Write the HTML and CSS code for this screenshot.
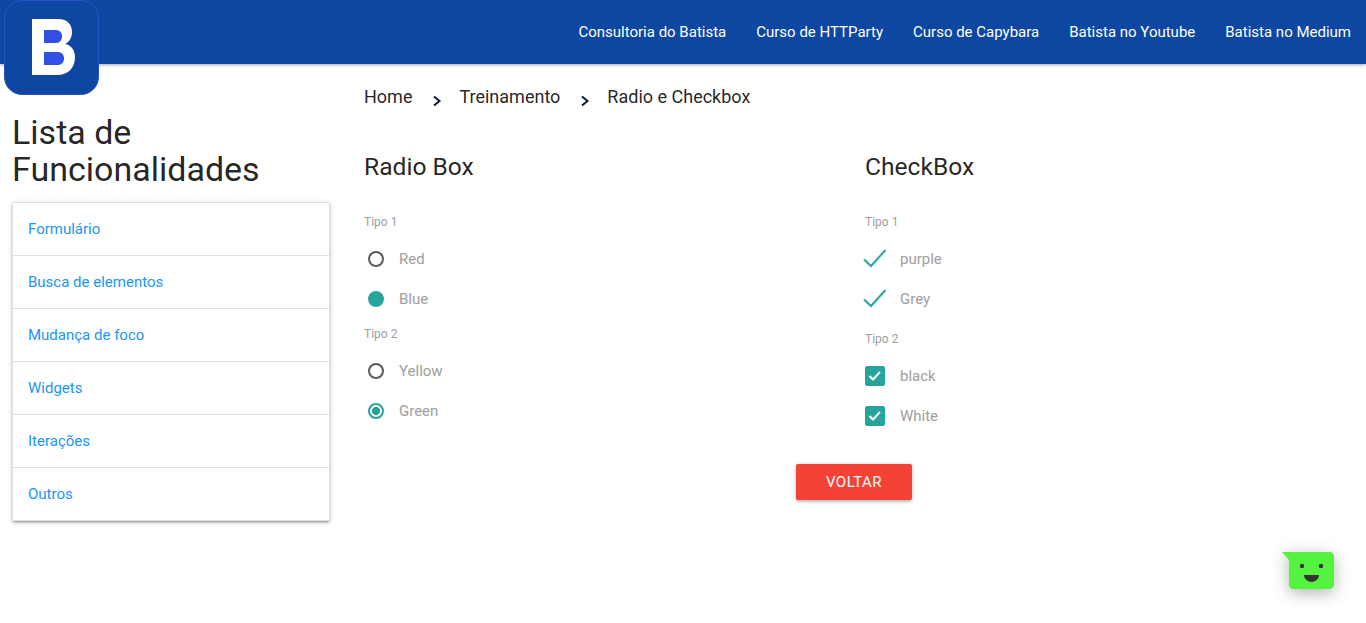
FILE: index.html
```html
<!DOCTYPE html>
<html lang="pt-BR">
<head>
	<meta charset="utf-8">
	<title>Radio e Checkbox</title>
	<link rel="stylesheet" href="styles.css">
</head>
<body>
	<nav class="topbar">
		<a href="#">Consultoria do Batista</a>
		<a href="#">Curso de HTTParty</a>
		<a href="#">Curso de Capybara</a>
		<a href="#">Batista no Youtube</a>
		<a href="#">Batista no Medium</a>
	</nav>

	<!-- logo fica por cima da barra -->
	<div class="logo">
		<svg width="43" height="56" viewBox="0 0 43 56">
			<path fill="#fff" d="M0 0H26C36 0 40 6 40 13C40 19 37 23 33 25C39 26 43 31 43 38C43 49 36 56 25 56H0Z"/>
			<path fill="#3350e4" d="M12 11H24C28 11 30 14 30 17C30 21 28 24 24 24H12ZM12 33H26C30 33 32 36 32 39.500C32 43 30 46 26 46H12Z"/>
		</svg>
	</div>

	<div class="page">
		<aside class="sidebar">
			<h3 class="side-title">Lista de Funcionalidades</h3>
			<ul class="collection">
				<li><a href="#">Formulário</a></li>
				<li><a href="#">Busca de elementos</a></li>
				<li><a href="#">Mudança de foco</a></li>
				<li><a href="#">Widgets</a></li>
				<li><a href="#">Iterações</a></li>
				<li><a href="#">Outros</a></li>
			</ul>
		</aside>

		<main class="content">
			<div class="breadcrumb">
				<a href="#">Home</a>
				<svg class="chevron" width="10" height="12" viewBox="0 0 10 12"><path d="M2 1.500L7.500 6L2 10.500" fill="none" stroke="#0b1a33" stroke-width="2"/></svg>
				<a href="#">Treinamento</a>
				<svg class="chevron" width="10" height="12" viewBox="0 0 10 12"><path d="M2 1.500L7.500 6L2 10.500" fill="none" stroke="#0b1a33" stroke-width="2"/></svg>
				<a href="#">Radio e Checkbox</a>
			</div>

			<div class="columns">
				<section class="col">
					<h5 class="col-title">Radio Box</h5>
					<p class="label">Tipo 1</p>
					<div class="opt"><span class="radio"></span>Red</div>
					<div class="opt"><span class="radio filled"></span>Blue</div>
					<p class="label label-near">Tipo 2</p>
					<div class="opt"><span class="radio"></span>Yellow</div>
					<div class="opt"><span class="radio gap"></span>Green</div>
				</section>
				<section class="col">
					<h5 class="col-title">CheckBox</h5>
					<p class="label">Tipo 1</p>
					<div class="opt"><svg class="tick" width="24" height="20" viewBox="0 0 24 20"><path d="M1 10.500L8 17L22.500 1" fill="none" stroke="#26a69a" stroke-width="2"/></svg>purple</div>
					<div class="opt"><svg class="tick" width="24" height="20" viewBox="0 0 24 20"><path d="M1 10.500L8 17L22.500 1" fill="none" stroke="#26a69a" stroke-width="2"/></svg>Grey</div>
					<p class="label label-far">Tipo 2</p>
					<div class="opt"><span class="box"><svg width="14" height="12" viewBox="0 0 14 12"><path d="M1.500 6L5 9.500L12 2" fill="none" stroke="#fff" stroke-width="2"/></svg></span>black</div>
					<div class="opt"><span class="box"><svg width="14" height="12" viewBox="0 0 14 12"><path d="M1.500 6L5 9.500L12 2" fill="none" stroke="#fff" stroke-width="2"/></svg></span>White</div>
				</section>
			</div>

			<div class="actions"><a class="btn" href="#">VOLTAR</a></div>
		</main>
	</div>

	<!-- widget de chat -->
	<div class="chat">
		<svg width="54" height="40" viewBox="0 0 54 40">
			<path fill="#54f33f" d="M0 0H47C50 0 52 2 52 5V32C52 35 50 37 47 37H12C9 37 7 35 7 32V8Z"/>
			<circle cx="20" cy="14" r="2.200" fill="#333"/>
			<circle cx="39" cy="14" r="2.200" fill="#333"/>
			<path fill="#333" d="M22 23H37C37 27 33 30 29.500 30C26 30 22 27 22 23Z"/>
		</svg>
	</div>
</body>
</html>
```

FILE: styles.css
```css
html, body {
  height: 100%;
  margin: 0;
}
body {
  background-color: #fff;
  font-family: Roboto, "Liberation Sans", sans-serif;
  color: rgba(0, 0, 0, 0.87);
  overflow: hidden;
}
a {
  text-decoration: none;
  color: inherit;
}

.topbar {
  height: 64px;
  background-color: #0d47a1;
  box-shadow: 0 1px 3px rgba(0, 0, 0, 0.35);
  display: flex;
  justify-content: flex-end;
  align-items: center;
}
.topbar a {
  color: #fff;
  font-size: 15px;
  padding: 0 15px;
}

.logo {
  position: absolute;
  left: 4px;
  top: 0;
  width: 95px;
  height: 95px;
  box-sizing: border-box;
  padding: 18px 0 0 27px;
  background-color: #0d47a1;
  border: 1px solid #2a52c4;
  border-radius: 18px;
}
.logo svg {
  display: block;
}

.page {
  display: flex;
}
.sidebar {
  width: 318px;
  margin-left: 12px;
  padding-top: 50px;
}
.side-title {
  font-size: 34px;
  font-weight: 400;
  line-height: 37px;
  margin: 0 0 14px;
}
.collection {
  list-style: none;
  margin: 0;
  padding: 0;
  border: 1px solid #e0e0e0;
  border-radius: 2px;
  box-shadow: 0 2px 2px rgba(0, 0, 0, 0.14), 0 3px 1px -2px rgba(0, 0, 0, 0.12), 0 1px 5px rgba(0, 0, 0, 0.2);
}
.collection li {
  height: 52px;
  line-height: 52px;
  padding-left: 15px;
  font-size: 15px;
  color: #2196f3;
  border-bottom: 1px solid #e0e0e0;
}
.collection li:last-child {
  border-bottom: 0;
}

.content {
  width: 1002px;
  margin-left: 23px;
}
.breadcrumb {
  display: flex;
  align-items: center;
  height: 20px;
  margin: 22px 0 0 11px;
  font-size: 18px;
}
.chevron {
  margin: 10px 17px 0 20px;
}

.columns {
  display: flex;
  margin: 47px 0 0 11px;
}
.col {
  flex: none;
  width: 501px;
}
.col-title {
  font-size: 24.600px;
  font-weight: 400;
  line-height: 28px;
  margin: 0 0 34px;
}
.label {
  font-size: 12px;
  line-height: 14px;
  color: #9e9e9e;
  margin: 0 0 10px;
}
.label-near {
  margin-top: 8px;
}
.label-far {
  margin-top: 13px;
}
.opt {
  display: flex;
  align-items: center;
  height: 40px;
  font-size: 15px;
  color: #9e9e9e;
}

.radio {
  width: 16px;
  height: 16px;
  box-sizing: border-box;
  border: 2px solid #5a5a5a;
  border-radius: 50%;
  margin: 0 15px 0 4px;
}
.radio.filled {
  border-color: #26a69a;
  background-color: #26a69a;
}
.radio.gap {
  border-color: #26a69a;
  background: radial-gradient(circle, #26a69a 0 3.800px, #fff 4.300px);
}
.tick {
  margin: 0 13px 0 -2px;
}
.box {
  width: 20px;
  height: 20px;
  display: flex;
  align-items: center;
  justify-content: center;
  background-color: #26a69a;
  border-radius: 2px;
  margin-right: 15px;
}

.actions {
  display: flex;
  justify-content: center;
  margin-top: 28px;
}
.btn {
  width: 116px;
  height: 36px;
  line-height: 36px;
  text-align: center;
  color: #fff;
  font-size: 15px;
  letter-spacing: 0.5px;
  background-color: #f44336;
  border-radius: 2px;
  box-shadow: 0 2px 2px rgba(0, 0, 0, 0.14), 0 1px 5px rgba(0, 0, 0, 0.2);
}

.chat {
  position: absolute;
  left: 1282px;
  top: 552px;
  width: 54px;
  height: 38px;
  filter: drop-shadow(0 4px 8px rgba(0, 0, 0, 0.3));
}
```
